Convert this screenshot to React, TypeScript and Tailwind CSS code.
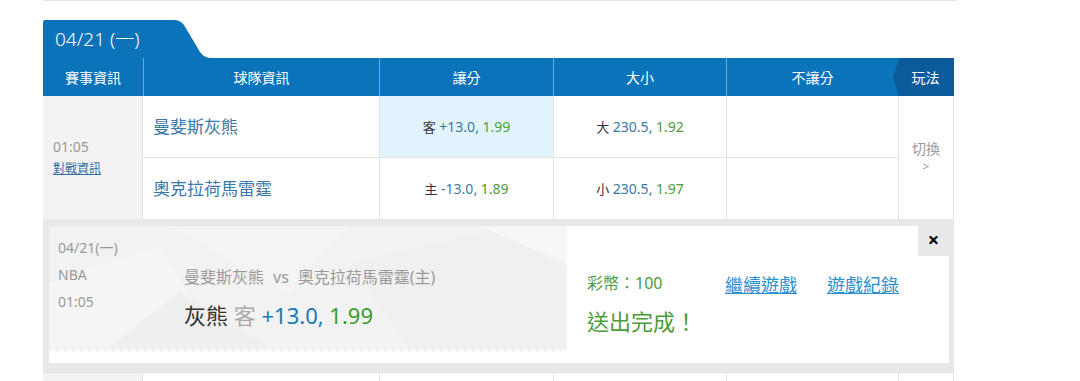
import React from 'react';

const cols = 'grid grid-cols-[100px_236px_174px_173px_172px_56px]';

const Odds = ({ tag, a, b }: { tag: string; a: string; b: string }) => (
  <span className="text-[14px]">
    <span className="text-[13px] text-[#333]">{tag}</span> <span className="text-[#3a78a6]">{a}</span>
    <span className="text-[#3a78a6]">, </span>
    <span className="text-[#4b9b3c]">{b}</span>
  </span>
);

const Facets = () => (
  <svg className="absolute inset-0 h-full w-full" viewBox="0 0 518 128" preserveAspectRatio="none">
    <rect width="518" height="128" fill="#f2f2f2" />
    <polygon points="0,60 110,20 170,128 0,128" fill="#f5f5f5" />
    <polygon points="120,0 300,0 240,70" fill="#f4f4f4" />
    <polygon points="300,40 460,0 518,50 518,128 360,128" fill="#f0f0f0" />
    <polygon points="430,0 518,0 518,40" fill="#f6f6f6" />
    <polygon points="60,128 130,70 220,128" fill="#efefef" />
  </svg>
);

const Zigzag = () => {
  const bumps = [];
  for (let x = 0; x < 518; x += 8) {
    bumps.push(`M${x} 6 Q${x + 4} -1 ${x + 8} 6`);
  }
  return (
    <svg className="block h-[6px] w-full" viewBox="0 0 518 6" preserveAspectRatio="none">
      <rect width="518" height="6" fill="#f2f2f2" />
      <path d={bumps.join(' ') + ' L518 6 L0 6 Z'} fill="#ffffff" />
    </svg>
  );
};

export default function App() {
  return (
    <div className="w-[1080px] h-[381px] overflow-hidden bg-white font-['Noto_Sans','Noto_Sans_CJK_TC',sans-serif]">
      <div className="ml-[43px] w-[911px]">
        <div className="h-px w-[914px] bg-[#e4e4e4]" />

        {/* 日期頁籤 */}
        <div className="mt-[19px] flex h-[38px]">
          <div className="flex w-[127px] items-center rounded-tl-[2px] bg-[#0b73b9] pl-[12px] text-[19px] font-light text-white">
            04/21 (一)
          </div>
          <svg width="44" height="38" viewBox="0 0 44 38">
            <path d="M0 0 L4 0 Q10 0 14 5 L30 32 Q34 38 42 38 L44 38 L0 38 Z" fill="#0b73b9" />
          </svg>
        </div>

        {/* 表頭 */}
        <div className={`${cols} h-[38px] bg-[#0b73b9] text-[14px] text-white`}>
          <div className="flex items-center justify-center">賽事資訊</div>
          <div className="flex items-center justify-center border-l border-white/40">球隊資訊</div>
          <div className="flex items-center justify-center border-l border-white/40">讓分</div>
          <div className="flex items-center justify-center border-l border-white/40">大小</div>
          <div className="flex items-center justify-center border-l border-white/40">不讓分</div>
          <div className="flex items-center">
            <svg width="6" height="38" viewBox="0 0 6 38" className="-ml-[5px]">
              <path d="M6 0 L6 38 L0 19 Z" fill="#0a5a9c" />
            </svg>
            <div className="flex h-full flex-1 items-center justify-center bg-[#0a5a9c] pr-[2px]">玩法</div>
          </div>
        </div>

        {/* 賽事 */}
        <div className={`${cols} grid-rows-[62px_61px]`}>
          <div className="row-span-2 flex flex-col justify-center border-r border-[#e2e2e2] bg-[#f3f3f3] pl-[10px]">
            <div className="text-[14px] leading-[22px] text-[#999]">01:05</div>
            <a href="#" className="text-[12px] leading-[22px] text-[#2f6ea3] underline">對戰資訊</a>
          </div>
          <div className="flex items-center border-b border-[#e2e2e2] pl-[10px] text-[17px] text-[#3a78a6]">曼斐斯灰熊</div>
          <div className="flex items-center justify-center border-b border-l border-[#e2e2e2] bg-[#e1f3fc]">
            <Odds tag="客" a="+13.0" b="1.99" />
          </div>
          <div className="flex items-center justify-center border-b border-l border-[#e2e2e2]">
            <Odds tag="大" a="230.5" b="1.92" />
          </div>
          <div className="border-b border-l border-[#e2e2e2]" />
          <div className="row-span-2 flex flex-col items-center justify-center border-x border-[#e2e2e2] text-[14px] leading-[18px] text-[#999]">
            <div>切換</div>
            <div className="text-[12px]">&gt;</div>
          </div>
          <div className="flex items-center pl-[10px] text-[17px] text-[#3a78a6]">奧克拉荷馬雷霆</div>
          <div className="flex items-center justify-center border-l border-[#e2e2e2]">
            <Odds tag="主" a="-13.0" b="1.89" />
          </div>
          <div className="flex items-center justify-center border-l border-[#e2e2e2]">
            <Odds tag="小" a="230.5" b="1.97" />
          </div>
          <div className="border-l border-[#e2e2e2]" />
        </div>

        {/* 下注完成 */}
        <div className="h-[153px] bg-[#e8e8e8] pl-[6px] pr-[5px] pt-[7px]">
          <div className="relative flex h-[137px] bg-white">
            <div className="flex w-[518px] flex-col">
              <div className="relative flex h-[121px]">
                <Facets />
                <div className="relative w-[135px] pl-[9px] pt-[8px] text-[14px] leading-[27px] text-[#999]">
                  <div>04/21(一)</div>
                  <div>NBA</div>
                  <div>01:05</div>
                </div>
                <div className="relative pt-[38px]">
                  <div className="text-[16px] leading-[26px] text-[#9a9a9a]">
                    曼斐斯灰熊<span className="mx-[9px]">vs</span>奧克拉荷馬雷霆(主)
                  </div>
                  <div className="mt-[9px] text-[22px] leading-[32px]">
                    <span className="text-[#333]">灰熊</span> <span className="text-[#aaa]">客</span>{' '}
                    <span className="text-[#1a78b4]">+13.0, </span>
                    <span className="text-[#3d9a2c]">1.99</span>
                  </div>
                </div>
              </div>
              <Zigzag />
            </div>
            <div className="flex flex-1 pl-[20px] pt-[45px]">
              <div className="w-[138px]">
                <div className="text-[16px] leading-[24px] text-[#4b9b3c]">彩幣：100</div>
                <div className="mt-[11px] text-[22px] leading-[30px] text-[#4b9b3c]">送出完成！</div>
              </div>
              <a href="#" className="mt-[2px] h-fit text-[18px] leading-[24px] text-[#2b8fd2] underline">繼續遊戲</a>
              <a href="#" className="ml-[30px] mt-[2px] h-fit text-[18px] leading-[24px] text-[#2b8fd2] underline">遊戲紀錄</a>
            </div>
            <button className="absolute right-0 top-0 flex h-[30px] w-[31px] items-center justify-center bg-[#e8e8e8] pb-[3px] text-[20px] font-bold leading-none text-black">
              ×
            </button>
          </div>
        </div>

        {/* 下一場 */}
        <div className={`${cols} h-[20px] border-t border-[#e2e2e2]`}>
          <div className="border-r border-[#e2e2e2] bg-[#f3f3f3]" />
          <div />
          <div className="border-l border-[#e2e2e2]" />
          <div className="border-l border-[#e2e2e2]" />
          <div className="border-l border-[#e2e2e2]" />
          <div className="border-x border-[#e2e2e2]" />
        </div>
      </div>
    </div>
  );
}
